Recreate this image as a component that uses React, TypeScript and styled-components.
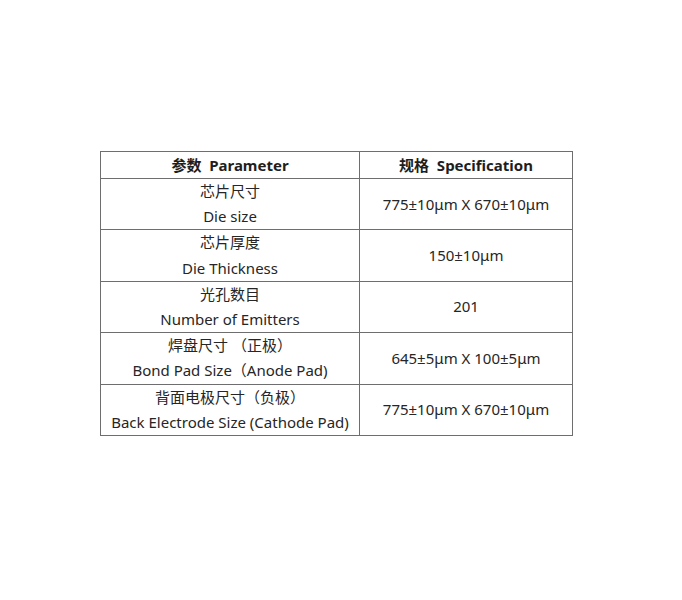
import React from "react";
import styled, { createGlobalStyle } from "styled-components";

const GlobalStyle = createGlobalStyle`
  body {
    margin: 0;
    background: #ffffff;
    font-family: "Noto Sans", "Noto Sans CJK SC", sans-serif;
    color: #262626;
  }
`;

interface iRow {
  zh: string;
  en: string;
  value: string;
}

const rows: iRow[] = [
  { zh: "芯片尺寸", en: "Die size", value: "775±10μm X 670±10μm" },
  { zh: "芯片厚度", en: "Die Thickness", value: "150±10μm" },
  { zh: "光孔数目", en: "Number of Emitters", value: "201" },
  { zh: "焊盘尺寸 （正极）", en: "Bond Pad Size（Anode Pad)", value: "645±5μm X 100±5μm" },
  { zh: "背面电极尺寸（负极）", en: "Back Electrode Size (Cathode Pad)", value: "775±10μm X 670±10μm" },
];

export default function App() {
  return (
    <>
      <GlobalStyle />
      <Page>
        <Table>
          <colgroup>
            <col style={{ width: 259 }} />
            <col style={{ width: 213 }} />
          </colgroup>
          <thead>
            <tr>
              <HeadCell>参数&nbsp; Parameter</HeadCell>
              <HeadCell>规格&nbsp; Specification</HeadCell>
            </tr>
          </thead>
          <tbody>
            {rows.map((r) => (
              <tr key={r.en}>
                <Cell>
                  <Line>{r.zh}</Line>
                  <Line>{r.en}</Line>
                </Cell>
                <Cell>{r.value}</Cell>
              </tr>
            ))}
          </tbody>
        </Table>
      </Page>
    </>
  );
}

const Page = styled.div`
  padding: 151px 0 0 100px;
`;

const Table = styled.table`
  border-collapse: collapse;
  table-layout: fixed;
  width: 473px;
`;

const HeadCell = styled.th`
  border: 1px solid #6e6e6e;
  height: 26px;
  padding: 0;
  font-size: 15px;
  line-height: 26px;
  font-weight: 700;
  text-align: center;
  vertical-align: middle;
  color: #1e1e1e;
`;

const Cell = styled.td`
  border: 1px solid #6e6e6e;
  height: 50.4px;
  padding: 0;
  font-size: 15px;
  line-height: 25.2px;
  text-align: center;
  vertical-align: middle;
  white-space: nowrap;
`;

const Line = styled.div`
  line-height: 25.2px;
`;
